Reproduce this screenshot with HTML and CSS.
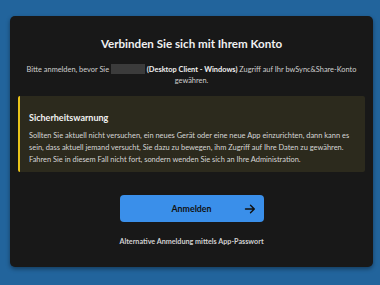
FILE: index.html
```html
<!DOCTYPE html>
<html lang="de">
<head>
<meta charset="utf-8">
<link rel="stylesheet" href="styles.css">
</head>
<body>
<main class="card">
  <h1 class="title">Verbinden Sie sich mit Ihrem Konto</h1>
  <p class="intro">Bitte anmelden, bevor Sie <span class="redacted"></span> <strong>(Desktop Client - Windows)</strong> Zugriff auf Ihr bwSync&amp;Share-Konto gewähren.</p>
  <section class="warning">
    <h2 class="warning-title">Sicherheitswarnung</h2>
    <p class="warning-text">Sollten Sie aktuell nicht versuchen, ein neues Gerät oder eine neue App einzurichten, dann kann es sein, dass aktuell jemand versucht, Sie dazu zu bewegen, ihm Zugriff auf Ihre Daten zu gewähren. Fahren Sie in diesem Fall nicht fort, sondern wenden Sie sich an Ihre Administration.</p>
  </section>
  <button class="login">
    <span class="login-label">Anmelden</span>
    <svg class="arrow" width="12" height="12" viewBox="0 0 12 12"><path d="M1.5 6h8.5M6.5 2.2L10.3 6 6.5 9.8" fill="none" stroke="#111" stroke-width="1.4" stroke-linecap="round" stroke-linejoin="round"/></svg>
  </button>
  <a class="alt" href="#">Alternative Anmeldung mittels App-Passwort</a>
</main>
</body>
</html>
```
FILE: styles.css
```css
html, body {
  margin: 0;
  padding: 0;
}
body {
  background: #22649c;
  width: 380px;
  height: 285px;
  overflow: hidden;
  font-family: Lato, "Noto Sans", sans-serif;
  color: #d6d6d6;
}
.card {
  margin: 16px 7px 0 10px;
  height: 251px;
  box-sizing: border-box;
  background: #181818;
  border-radius: 5px;
  box-shadow: 0 2px 4px rgba(0,0,0,0.4);
  padding: 20px 8px 0;
  display: flex;
  flex-direction: column;
  align-items: center;
}
.title {
  margin: 0;
  font-size: 11.6px;
  line-height: 16px;
  font-weight: 700;
  color: #f0f0f0;
  text-align: center;
}
.intro {
  margin: 12px 0 0;
  font-size: 7.4px;
  line-height: 11px;
  text-align: center;
  color: #cfcfcf;
  padding: 0;
}
.intro strong {
  color: #f0f0f0;
}
.redacted {
  display: inline-block;
  width: 34px;
  height: 10px;
  background: #3b3b3b;
  vertical-align: -2px;
}
.warning {
  align-self: stretch;
  margin-top: 10px;
  background: #2c2a1d;
  border-left: 2px solid #e9c21a;
  border-radius: 2px;
  padding: 16px 8px 6px 9px;
}
.warning-title {
  margin: 0;
  font-size: 9px;
  line-height: 12px;
  font-weight: 700;
  color: #f2f2f2;
}
.warning-text {
  margin: 6px 0 0;
  font-size: 7.45px;
  line-height: 12px;
  color: #d6d6d6;
}
.login {
  margin-top: 23px;
  width: 144px;
  height: 27px;
  border: none;
  border-radius: 4px;
  background: #3a8fea;
  display: flex;
  align-items: center;
  justify-content: center;
  position: relative;
  font-family: inherit;
  padding: 0;
}
.login-label {
  font-size: 8.8px;
  font-weight: 700;
  color: #111;
}
.arrow {
  position: absolute;
  right: 8px;
  top: 8px;
}
.alt {
  margin-top: 15px;
  font-size: 7.2px;
  line-height: 10px;
  font-weight: 700;
  color: #d0d0d0;
  text-decoration: none;
}
```
